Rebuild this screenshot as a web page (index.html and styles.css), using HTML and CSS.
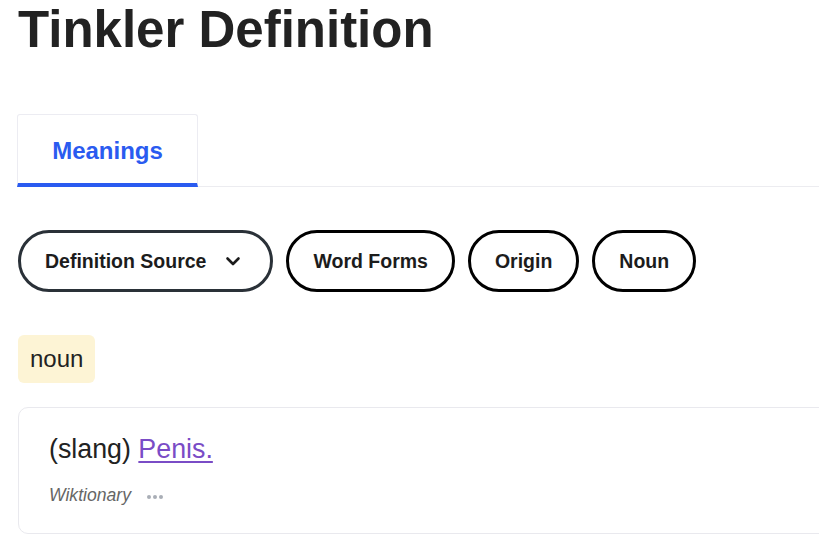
FILE: index.html
```html
<!DOCTYPE html>
<html lang="en">
<head>
<meta charset="utf-8">
<title>Tinkler Definition</title>
<link rel="stylesheet" href="styles.css">
</head>
<body>
<main class="page">
  <h1 class="title">Tinkler Definition</h1>

  <div class="tabs">
    <div class="tab tab-active">Meanings</div>
  </div>

  <div class="chips">
    <button class="chip chip-dropdown">
      <span>Definition Source</span>
      <svg class="chev" width="24" height="24" viewBox="0 0 24 24" fill="none" stroke="currentColor" stroke-width="2.6" stroke-linecap="round" stroke-linejoin="round"><path d="M6.5 9.5l5.5 5.5 5.5-5.5"/></svg>
    </button>
    <button class="chip">Word Forms</button>
    <button class="chip">Origin</button>
    <button class="chip">Noun</button>
  </div>

  <div class="pos">noun</div>

  <section class="card">
    <p class="def">(slang) <a class="def-link" href="#">Penis.</a></p>
    <div class="meta">
      <span class="source">Wiktionary</span>
      <span class="dots"><i></i><i></i><i></i></span>
    </div>
  </section>
</main>
</body>
</html>
```

FILE: styles.css
```css
html, body {
  margin: 0;
  padding: 0;
  background: #fff;
  overflow: hidden;
}

body {
  font-family: "Liberation Sans", Arial, sans-serif;
  color: #222;
}

.page {
  width: 900px;
  padding-left: 18px;
}

.title {
  margin: 0;
  font-size: 51px;
  line-height: 60px;
  font-weight: 700;
  color: #222;
}

.tabs {
  margin-top: 54px;
  display: flex;
  border-bottom: 1px solid #ececf0;
}

.tab {
  box-sizing: border-box;
  width: 181px;
  height: 73px;
  margin-bottom: -1px;
  display: flex;
  align-items: center;
  justify-content: center;
  padding-top: 3px;
  border: 1px solid #ececf2;
  border-bottom: 4px solid #2a5bf0;
  border-radius: 3px 3px 0 0;
  font-size: 24px;
  font-weight: 700;
  color: #2a5bf0;
  margin-left: -1px;
}

.chips {
  margin-top: 43px;
  display: flex;
  gap: 13px;
}

.chip {
  box-sizing: border-box;
  height: 62px;
  display: flex;
  align-items: center;
  padding: 0 24px;
  border: 3px solid #000;
  border-radius: 31px;
  background: #fff;
  font-family: "Liberation Sans", Arial, sans-serif;
  font-size: 19.5px;
  font-weight: 700;
  color: #1c1c1c;
}

.chip-dropdown {
  border-color: #2a3138;
  padding-right: 25px;
}

.chev {
  margin-left: 15px;
  color: #1c1c1c;
}

.pos {
  margin-top: 43px;
  display: inline-block;
  box-sizing: border-box;
  height: 48px;
  line-height: 48px;
  padding: 0 12px;
  border-radius: 6px;
  background: #fdf4d5;
  font-size: 24px;
  color: #222;
}

.card {
  margin-top: 24px;
  border: 1px solid #e9e9ee;
  border-radius: 10px;
  padding: 26px 30px 27px;
}

.def {
  margin: 0;
  font-size: 26.8px;
  color: #222;
}

.def-link {
  color: #7a4cc6;
  text-decoration: underline;
  text-decoration-thickness: 2px;
  text-underline-offset: 3px;
}

.meta {
  margin-top: 20px;
  display: flex;
  align-items: center;
  gap: 16px;
}

.source {
  font-size: 17.6px;
  font-style: italic;
  color: #666;
}

.dots {
  display: flex;
  gap: 2px;
  margin-top: 2px;
}

.dots i {
  width: 4px;
  height: 4px;
  border-radius: 50%;
  background: #a9aeb6;
}
```
